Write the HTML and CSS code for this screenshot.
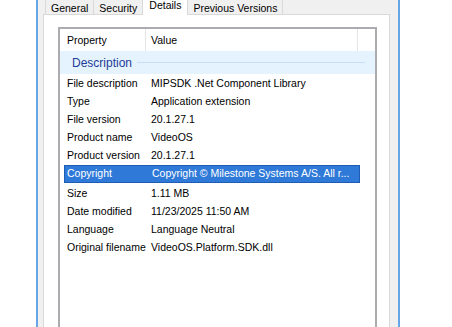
FILE: index.html
```html
<!DOCTYPE html>
<html lang="en">
  <head>
    <meta charset="UTF-8" />
    <meta name="viewport" content="width=device-width, initial-scale=1.0" />
    <title>VideoOS.Platform.SDK.dll Properties</title>
    <link rel="stylesheet" href="styles.css">
  </head>
  <body>
    <div class="window">
      <div class="tabs">
        <span class="tab">General</span>
        <span class="tab">Security</span>
        <span class="tab active">Details</span>
        <span class="tab">Previous Versions</span>
      </div>

      <div class="panel">
        <div class="list">
          <div class="list-head">
            <span class="col-prop">Property</span>
            <span class="col-val">Value</span>
          </div>

          <div class="group">Description</div>

          <div class="row"><span class="k">File description</span><span class="v">MIPSDK .Net Component Library</span></div>
          <div class="row"><span class="k">Type</span><span class="v">Application extension</span></div>
          <div class="row"><span class="k">File version</span><span class="v">20.1.27.1</span></div>
          <div class="row"><span class="k">Product name</span><span class="v">VideoOS</span></div>
          <div class="row"><span class="k">Product version</span><span class="v">20.1.27.1</span></div>
          <div class="row sel"><span class="k">Copyright</span><span class="v">Copyright © Milestone Systems A/S. All r...</span></div>
          <div class="row"><span class="k">Size</span><span class="v">1.11 MB</span></div>
          <div class="row"><span class="k">Date modified</span><span class="v">11/23/2025 11:50 AM</span></div>
          <div class="row"><span class="k">Language</span><span class="v">Language Neutral</span></div>
          <div class="row"><span class="k">Original filename</span><span class="v">VideoOS.Platform.SDK.dll</span></div>
        </div>
      </div>
    </div>
  </body>
</html>
```

FILE: styles.css
```css
body {
  margin: 0;
  height: 327px;
  overflow: hidden;
  background: #fff;
  font-family: "Liberation Sans", Arial, sans-serif;
  font-size: 10.5px;
  color: #000;
}

.window {
  box-sizing: border-box;
  width: 364px;
  height: 327px;
  margin-left: 36px;
  padding: 0 8px 0 5px;
  overflow: hidden;
  background: #f0f0f0;
  border-left: 2px solid #66a6e6;
  border-right: 2px solid #66a6e6;
}

/* tab strip */
.tabs {
  display: flex;
  align-items: flex-end;
  height: 14px;
  padding-left: 2px;
}

.tab {
  box-sizing: border-box;
  height: 21px;
  padding: 7px 5px 0;
  line-height: 14px;
  background: #f0f0f0;
  border: 1px solid #d9d9d9;
  border-bottom: none;
  margin-left: -1px;
  white-space: nowrap;
}

.tab:first-child {
  margin-left: 0;
}

.tab.active {
  position: relative;
  z-index: 1;
  height: 25px;
  margin-bottom: -1px;
  padding: 7px 6px 0;
  background: #fff;
}

/* details page */
.panel {
  box-sizing: border-box;
  height: 313px;
  padding: 12px 12px 0 14px;
  background: #fff;
  border: 1px solid #d9d9d9;
  border-bottom: none;
}

.list {
  height: 100%;
  background: #fff;
  border: 2px solid #acacb0;
  border-bottom: none;
}

.list-head {
  display: flex;
  height: 22px;
  line-height: 22px;
}

.col-prop,
.col-val {
  box-sizing: border-box;
  border-right: 1px solid #e5e5e5;
}

.col-prop {
  width: 86px;
  padding-left: 7px;
}

.col-val {
  width: 212px;
  padding-left: 5px;
}

.group {
  display: flex;
  align-items: center;
  height: 23px;
  padding: 0 10px 0 12px;
  background: #e5f3ff;
  color: #1e3c96;
  font-size: 12px;
}

.group::after {
  content: "";
  flex: 1;
  height: 1px;
  margin-left: 5px;
  background: #c9ddf4;
}

.row {
  display: grid;
  grid-template-columns: 82px 212px;
  height: 18px;
  margin-left: 4px;
  line-height: 18px;
  white-space: nowrap;
}

.row .k {
  padding-left: 3px;
}

.row .v {
  padding-left: 5px;
}

.row.sel {
  width: fit-content;
  height: 16px;
  margin: 1px 0 1px 4px;
  line-height: 14px;
  background: #2f7ad8;
  border: 1px solid #1e5db3;
  color: #fff;
}

.row.sel .k {
  padding-left: 2px;
}
```
